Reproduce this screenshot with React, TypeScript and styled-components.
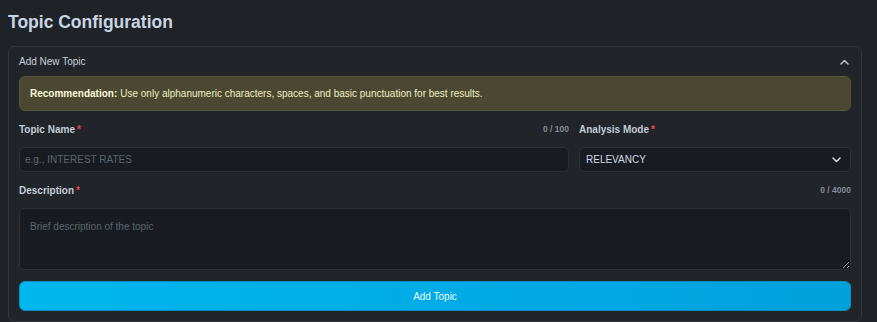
import * as React from 'react';
import styled, { createGlobalStyle } from 'styled-components';

const GlobalStyle = createGlobalStyle`
	html, body {
		margin: 0;
		padding: 0;
		background: #1f2227;
	}
	body {
		font-family: 'Liberation Sans', Arial, sans-serif;
	}
`;

const Page = styled.div`
	padding: 8px 15px 1px 8px;
	min-height: 322px;
	box-sizing: border-box;
`;

const Title = styled.h1`
	margin: 0;
	font-size: 17.5px;
	line-height: 28px;
	font-weight: 700;
	color: #c9d5e4;
	height: 38px;
`;

const Panel = styled.section`
	border: 1px solid #32363c;
	border-radius: 6px;
	background: #212429;
	padding: 0 10px 10px;
	display: flex;
	flex-direction: column;
`;

const PanelHeader = styled.div`
	display: flex;
	align-items: center;
	justify-content: space-between;
	height: 29px;
	font-size: 10px;
	color: #c8d1db;
	padding-right: 2px;
`;

const Recommendation = styled.div`
	height: 35px;
	box-sizing: border-box;
	display: flex;
	align-items: center;
	padding: 0 10px;
	border: 1px solid #56543a;
	border-radius: 6px;
	background: #4a4830;
	color: #efedc6;
	font-size: 10px;

	& > b {
		color: #fbf8dc;
		margin-right: 3px;
	}
`;

const Row = styled.div<{ $cols?: string }>`
	display: grid;
	grid-template-columns: ${p => p.$cols ?? '1fr 272px'};
	column-gap: 10px;
	margin-top: 9px;
`;

const Field = styled.div`
	display: flex;
	flex-direction: column;
	gap: 9px;
`;

const LabelRow = styled.div`
	display: flex;
	align-items: center;
	justify-content: space-between;
	height: 18px;
`;

const Label = styled.label`
	font-size: 10px;
	font-weight: 700;
	color: #c4cdd8;

	& > span {
		color: #e5484d;
		margin-left: 2px;
	}
`;

const Counter = styled.span`
	font-size: 8.5px;
	font-weight: 700;
	color: #858d97;
`;

const controlBase = `
	box-sizing: border-box;
	border: 1px solid #2b3037;
	border-radius: 5px;
	background: #181c22;
	color: #c8d1db;
	font-family: 'Liberation Sans', Arial, sans-serif;
	font-size: 10px;
	outline: none;
	&::placeholder {
		color: #5c636c;
	}
`;

const Input = styled.input`
	${controlBase}
	height: 25px;
	padding: 0 5px;
`;

const Select = styled.div`
	${controlBase}
	height: 25px;
	padding: 0 9px 0 6px;
	display: flex;
	align-items: center;
	justify-content: space-between;
	color: #d2d9e1;
`;

const TextArea = styled.textarea<{ $rows: number }>`
	${controlBase}
	height: ${p => p.$rows * 15.5}px;
	padding: 12px 10px;
	resize: vertical;
	display: block;
`;

const Button = styled.button<{ $top: number }>`
	margin-top: ${p => p.$top}px;
	height: 30px;
	border: 1px solid #0b8dbd;
	border-radius: 6px;
	background: linear-gradient(90deg, #00b6ef 0%, #00a1dd 100%);
	color: #e8f8ff;
	font-family: 'Liberation Sans', Arial, sans-serif;
	font-size: 10px;
	cursor: pointer;
`;

const Chevron = ({ up }: { up?: boolean }) => (
	<svg width="9" height="6" viewBox="0 0 9 6" fill="none">
		<path
			d={up ? 'M1 5 L4.5 1.5 L8 5' : 'M1 1 L4.5 4.5 L8 1'}
			stroke={up ? '#b9c2cc' : '#d2d9e1'}
			strokeWidth="1.5"
			strokeLinecap="round"
			strokeLinejoin="round"
		/>
	</svg>
);

export default function App() {
	return (
		<Page>
			<GlobalStyle />
			<Title>Topic Configuration</Title>
			<Panel>
				<PanelHeader>
					<span>Add New Topic</span>
					<Chevron up />
				</PanelHeader>
				<Recommendation>
					<b>Recommendation:</b> Use only alphanumeric characters, spaces, and basic punctuation for best results.
				</Recommendation>
				<Row>
					<Field>
						<LabelRow>
							<Label>Topic Name<span>*</span></Label>
							<Counter>0 / 100</Counter>
						</LabelRow>
						<Input placeholder="e.g., INTEREST RATES" />
					</Field>
					<Field>
						<LabelRow>
							<Label>Analysis Mode<span>*</span></Label>
						</LabelRow>
						<Select>
							<span>RELEVANCY</span>
							<Chevron />
						</Select>
					</Field>
				</Row>
				<Row $cols="1fr">
					<Field>
						<LabelRow>
							<Label>Description<span>*</span></Label>
							<Counter>0 / 4000</Counter>
						</LabelRow>
						<TextArea $rows={4} placeholder="Brief description of the topic" />
					</Field>
				</Row>
				<Button $top={11}>Add Topic</Button>
			</Panel>
		</Page>
	);
}
